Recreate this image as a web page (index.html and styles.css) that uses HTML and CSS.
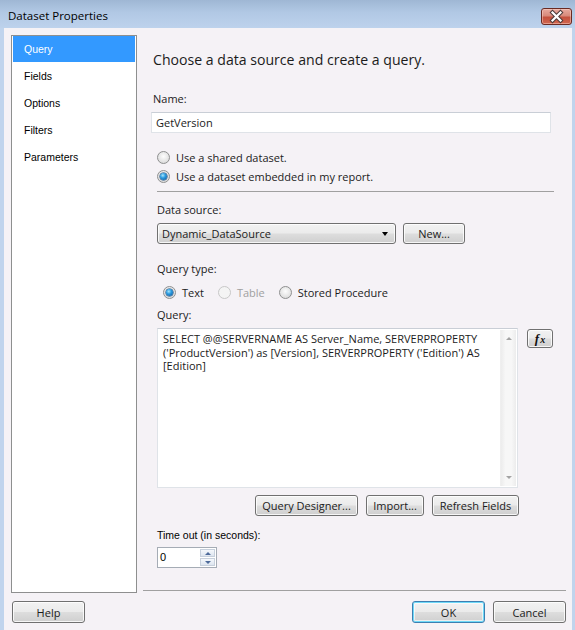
FILE: index.html
```html
<!DOCTYPE html>
<html>
<head>
<meta charset="utf-8">
<title>Dataset Properties</title>
<link rel="stylesheet" href="styles.css">
</head>
<body>
<div class="window">
  <div class="titlebar">
    <span class="title">Dataset Properties</span>
    <span class="close">
      <svg width="31" height="17" viewBox="0 0 31 17">
        <path d="M11.5 4.5 L19.5 12.5 M19.5 4.5 L11.5 12.5" stroke="#4a3a3a" stroke-width="4.2" stroke-linecap="square" fill="none"/>
        <path d="M11.5 4.5 L19.5 12.5 M19.5 4.5 L11.5 12.5" stroke="#ffffff" stroke-width="2.2" stroke-linecap="square" fill="none"/>
      </svg>
    </span>
  </div>
  <div class="frame">
    <div class="client">
      <div class="main">
        <nav class="nav">
          <div class="nav-item selected">Query</div>
          <div class="nav-item">Fields</div>
          <div class="nav-item">Options</div>
          <div class="nav-item">Filters</div>
          <div class="nav-item">Parameters</div>
        </nav>
        <section class="content">
          <h1 class="heading">Choose a data source and create a query.</h1>
          <div class="label name-label">Name:</div>
          <div class="textbox name-box">GetVersion</div>
          <div class="sub">
            <div class="radio-list">
              <div class="radio-row"><span class="radio"></span><span>Use a shared dataset.</span></div>
              <div class="radio-row"><span class="radio checked"></span><span>Use a dataset embedded in my report.</span></div>
            </div>
            <div class="rule"></div>
            <div class="label ds-label">Data source:</div>
            <div class="ds-row">
              <div class="combo"><span>Dynamic_DataSource</span><span class="arrow"></span></div>
              <div class="btn new-btn">New...</div>
            </div>
            <div class="label qt-label">Query type:</div>
            <div class="qt-row">
              <div class="qt-item"><span class="radio checked"></span><span>Text</span></div>
              <div class="qt-item disabled"><span class="radio"></span><span>Table</span></div>
              <div class="qt-item"><span class="radio"></span><span>Stored Procedure</span></div>
            </div>
            <div class="label q-label">Query:</div>
            <div class="query-row">
              <div class="query-box">
                <div class="query-text">SELECT @@SERVERNAME AS Server_Name, SERVERPROPERTY<br>('ProductVersion') as [Version], SERVERPROPERTY ('Edition') AS<br>[Edition]</div>
                <div class="vscroll">
                  <span class="sarrow up"></span>
                  <span class="sarrow down"></span>
                </div>
              </div>
              <div class="btn fx-btn"><span class="fx"><i>f</i><i class="fx-x">x</i></span></div>
            </div>
            <div class="qbtn-row">
              <div class="btn qd-btn">Query Designer...</div>
              <div class="btn imp-btn">Import...</div>
              <div class="btn rf-btn">Refresh Fields</div>
            </div>
            <div class="label legacy to-label">Time out (in seconds):</div>
            <div class="spinner">
              <span class="spin-val">0</span>
              <span class="spin-btns">
                <span class="spin-b"><span class="tri-up"></span></span>
                <span class="spin-b"><span class="tri-down"></span></span>
              </span>
            </div>
          </div>
          <div class="rule bottom-rule"></div>
        </section>
      </div>
      <div class="footer">
        <div class="btn foot-btn">Help</div>
        <div class="foot-right">
          <div class="btn foot-btn default">OK</div>
          <div class="btn foot-btn">Cancel</div>
        </div>
      </div>
    </div>
  </div>
</div>
</body>
</html>
```
FILE: styles.css
```css
html, body {
  margin: 0;
  padding: 0;
}
body {
  width: 575px;
  height: 630px;
  overflow: hidden;
  font-family: "Open Sans", "Noto Sans", sans-serif;
  font-size: 11px;
  color: #1b1b1b;
}
.window {
  width: 575px;
  height: 630px;
  display: flex;
  flex-direction: column;
  background: #c0d4ed;
}
.titlebar {
  height: 28px;
  flex: none;
  display: flex;
  align-items: flex-start;
  background: linear-gradient(#9fb7d4 0px, #b1c8e4 12px, #bdd2ec 28px);
}
.title {
  margin: 8px 0 0 8px;
  font-size: 11.5px;
  line-height: 16px;
  color: #000;
  flex: 1;
}
.close {
  margin: 8px 3px 0 0;
  width: 31px;
  height: 17px;
  box-sizing: border-box;
  border: 1px solid #6a2a22;
  border-radius: 3px;
  background: linear-gradient(#e7a99e 0%, #d88a7b 45%, #c4513e 55%, #d0664f 100%);
  box-shadow: inset 0 0 0 1px rgba(255,220,210,0.45);
  display: flex;
  align-items: center;
  justify-content: center;
  overflow: hidden;
}
.close svg {
  display: block;
  margin: -1px;
}
.frame {
  flex: 1;
  display: flex;
  padding: 0 3px 0 4px;
  min-height: 0;
}
.client {
  flex: 1;
  background: #f5f2f6;
  display: flex;
  flex-direction: column;
}
.main {
  display: flex;
  padding: 7px 6px 0 7px;
  height: 558px;
}
.nav {
  width: 126px;
  height: 558px;
  box-sizing: border-box;
  border: 1px solid #8e8f8f;
  background: #fff;
  padding: 0 1px;
  flex: none;
  font-family: "Liberation Sans", Arial, sans-serif;
  font-size: 10.5px;
  color: #000;
}
.nav-item {
  height: 27px;
  line-height: 27px;
  padding-left: 11px;
}
.nav-item.selected {
  background: #3399ff;
  color: #fff;
  height: 26px;
  line-height: 26px;
  margin-bottom: 1px;
}
.content {
  flex: 1;
  margin-left: 6px;
  display: flex;
  flex-direction: column;
}
.heading {
  margin: 15px 0 0 10px;
  font-size: 14.1px;
  font-weight: normal;
  line-height: 20px;
  color: #1b1b1b;
}
.label {
  line-height: 16px;
  height: 16px;
}
.name-label {
  margin: 21px 0 0 10px;
}
.textbox {
  box-sizing: border-box;
  height: 21px;
  background: #fff;
  border: 1px solid #dfe3e8;
  border-top-color: #c9ced6;
  padding-left: 4px;
  line-height: 19px;
}
.name-box {
  margin: 5px 0 0 8px;
  width: 400px;
}
.sub {
  margin-left: 14px;
  display: flex;
  flex-direction: column;
}
.radio-list {
  margin-top: 15px;
}
.radio-row {
  height: 19px;
  display: flex;
  align-items: center;
}
.radio {
  width: 13px;
  height: 13px;
  box-sizing: border-box;
  border-radius: 50%;
  border: 1px solid #8e8f8f;
  background: radial-gradient(circle at 50% 40%, #fdfdfd 0%, #e6e6e6 55%, #d2d2d2 100%);
  margin-right: 6px;
  flex: none;
  position: relative;
}
.radio.checked::after {
  content: "";
  position: absolute;
  left: 2px;
  top: 2px;
  width: 7px;
  height: 7px;
  border-radius: 50%;
  background: radial-gradient(circle at 40% 35%, #a8e6fb 0%, #2b9be0 40%, #0b4f91 100%);
  box-shadow: 0 0 0 0.5px #0b3f73;
}
.rule {
  height: 1px;
  background: #a0a0a0;
  width: 397px;
  margin-top: 5px;
}
.ds-label {
  margin-top: 10px;
}
.ds-row {
  margin-top: 5px;
  display: flex;
  gap: 7px;
}
.btn {
  box-sizing: border-box;
  height: 21px;
  border: 1px solid #707070;
  border-radius: 3px;
  background: linear-gradient(#f2f2f2 0%, #ebebeb 48%, #dddddd 52%, #cfcfcf 100%);
  box-shadow: inset 0 0 0 1px rgba(255,255,255,0.8);
  display: flex;
  align-items: center;
  justify-content: center;
  color: #1b1b1b;
  line-height: 19px;
  flex: none;
}
.combo {
  box-sizing: border-box;
  width: 239px;
  height: 21px;
  border: 1px solid #707070;
  border-radius: 3px;
  background: linear-gradient(#f2f2f2 0%, #ebebeb 48%, #dddddd 52%, #cfcfcf 100%);
  box-shadow: inset 0 0 0 1px rgba(255,255,255,0.8);
  display: flex;
  align-items: center;
  justify-content: space-between;
  padding: 0 7px 0 4px;
  line-height: 19px;
}
.arrow {
  width: 0;
  height: 0;
  border-left: 3.5px solid transparent;
  border-right: 3.5px solid transparent;
  border-top: 4px solid #000;
}
.new-btn {
  width: 62px;
}
.qt-label {
  margin-top: 17px;
}
.qt-row {
  margin-top: 6px;
  height: 18px;
  display: flex;
  align-items: center;
  padding-left: 6px;
}
.qt-item {
  display: flex;
  align-items: center;
  margin-right: 14px;
}
.qt-item.disabled {
  color: #a0a0a0;
}
.qt-item.disabled .radio {
  border-color: #c8c8c8;
  background: #f4f4f4;
}
.q-label {
  margin-top: 6px;
}
.query-row {
  margin-top: 5px;
  display: flex;
  align-items: flex-start;
  gap: 9px;
}
.query-box {
  box-sizing: border-box;
  width: 361px;
  height: 160px;
  background: #fff;
  border: 1px solid #dfe3e8;
  border-top-color: #c9ced6;
  display: flex;
}
.query-text {
  flex: 1;
  padding: 3px 0 0 5px;
  line-height: 13.5px;
  white-space: nowrap;
  overflow: hidden;
}
.vscroll {
  width: 15px;
  margin: 1px 1px 1px 0;
  background: linear-gradient(90deg, #ececec, #f7f7f7 30%, #f7f7f7 70%, #ececec);
  border-left: 1px solid #efefef;
  display: flex;
  flex-direction: column;
  justify-content: space-between;
  align-items: center;
  padding: 7px 0 7px;
}
.sarrow {
  width: 0;
  height: 0;
  border-left: 3.5px solid transparent;
  border-right: 3.5px solid transparent;
}
.sarrow.up {
  border-bottom: 3.5px solid #a3a3a3;
}
.sarrow.down {
  border-top: 3.5px solid #a3a3a3;
}
.fx-btn {
  width: 26px;
  height: 19px;
  margin-top: 1px;
}
.fx {
  font-family: "Liberation Serif", "Times New Roman", serif;
  font-weight: bold;
  font-size: 13px;
  color: #111;
  line-height: 1;
}
.fx i {
  font-style: italic;
}
.fx-x {
  font-size: 10px;
  margin-left: 1px;
}
.qbtn-row {
  margin-top: 7px;
  width: 362px;
  display: flex;
  justify-content: flex-end;
  gap: 8px;
}
.qd-btn { width: 103px; }
.imp-btn { width: 58px; }
.rf-btn { width: 87px; }
.legacy {
  font-family: "Liberation Sans", Arial, sans-serif;
  font-size: 10.5px;
  color: #000;
}
.to-label {
  margin-top: 11px;
}
.spinner {
  margin-top: 4px;
  box-sizing: border-box;
  width: 60px;
  height: 21px;
  border: 1px solid #a5acb5;
  background: #fff;
  display: flex;
  align-items: stretch;
}
.spin-val {
  flex: 1;
  font-family: "Liberation Sans", Arial, sans-serif;
  font-size: 11px;
  color: #000;
  line-height: 19px;
  padding-left: 2px;
}
.spin-btns {
  width: 15px;
  display: flex;
  flex-direction: column;
  padding: 1px 1px 1px 0;
  gap: 1px;
}
.spin-b {
  flex: 1;
  box-sizing: border-box;
  border: 1px solid #c7d0dc;
  background: linear-gradient(#f5f8fc, #dde5ef);
  display: flex;
  align-items: center;
  justify-content: center;
}
.tri-up {
  width: 0; height: 0;
  border-left: 3px solid transparent;
  border-right: 3px solid transparent;
  border-bottom: 3px solid #4d6a9a;
}
.tri-down {
  width: 0; height: 0;
  border-left: 3px solid transparent;
  border-right: 3px solid transparent;
  border-top: 3px solid #4d6a9a;
}
.bottom-rule {
  margin-top: auto;
  margin-bottom: 2px;
  width: 100%;
}
.footer {
  margin-top: 8px;
  padding: 0 6px 0 8px;
  display: flex;
  justify-content: space-between;
}
.foot-right {
  display: flex;
  gap: 8px;
}
.foot-btn {
  width: 73px;
  height: 22px;
}
.foot-btn.default {
  border-color: #3c7fb1;
  box-shadow: inset 0 0 0 1px #6fd9f8, inset 0 0 0 2px rgba(255,255,255,0.6);
}
```
